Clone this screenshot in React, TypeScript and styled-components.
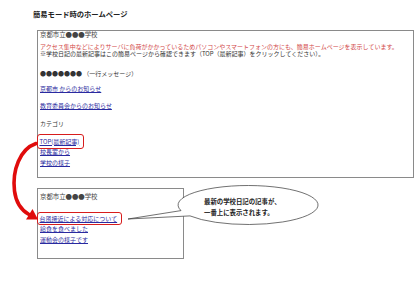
import React from 'react'
import styled, { createGlobalStyle } from 'styled-components'

const GlobalStyle = createGlobalStyle`
  html, body {
    margin: 0;
    padding: 0;
    background: #fff;
  }
  body {
    font-family: "Noto Sans CJK JP", "Noto Sans", sans-serif;
    color: #333;
  }
`

const Page = styled.div`
  position: relative;
  width: 420px;
  height: 291px;
  padding: 10px 0 0 33px;
  box-sizing: border-box;
`

const Title = styled.h1`
  margin: 0;
  font-size: 7.3px;
  line-height: 8px;
  font-weight: bold;
  color: #222;
`

const Frame = styled.div<{ w: number; h: number; top: number }>`
  box-sizing: border-box;
  width: ${({ w }) => w}px;
  height: ${({ h }) => h}px;
  margin: ${({ top }) => top}px 0 0 4px;
  padding: 0 0 0 2px;
  border: 1px solid #8a8a8a;
  font-size: 6px;
  line-height: 8px;
`

const Line = styled.div<{ gap?: number }>`
  margin-top: ${({ gap }) => gap ?? 0}px;
  white-space: nowrap;
`

const SchoolName = styled(Line)`
  font-size: 6.4px;
  color: #444;
`

const Notice = styled.div<{ gap: number }>`
  margin-top: ${({ gap }) => gap}px;
  line-height: 7px;
  white-space: nowrap;
`

const Warn = styled.div`
  color: #d24848;
`

const Links = styled.div<{ gap: number }>`
  display: flex;
  flex-direction: column;
  align-items: flex-start;
  gap: 3px;
  margin-top: ${({ gap }) => gap}px;
`

const Link = styled.a`
  color: #2a2aa0;
  text-decoration: underline;
  text-decoration-thickness: 0.5px;
  text-underline-offset: 1px;
  white-space: nowrap;
`

const Marked = styled.span<{ tall: number }>`
  display: inline-block;
  margin: ${({ tall }) => -tall}px 0 ${({ tall }) => -tall}px -3.5px;
  padding: ${({ tall }) => tall - 1.5}px 4px ${({ tall }) => tall - 1.5}px 2px;
  border: 1.5px solid #d81c1c;
  border-radius: 3px;
`

const Overlay = styled.svg`
  position: absolute;
  left: 0;
  top: 0;
  pointer-events: none;
`

const Bubble = styled.div`
  position: absolute;
  left: 204px;
  top: 196px;
  font-size: 6.4px;
  line-height: 11px;
  font-weight: bold;
  color: #222;
  white-space: nowrap;
`

export default function App() {
  return (
    <>
      <GlobalStyle />
      <Page>
        <Title>簡易モード時のホームページ</Title>
        <Frame w={377} h={148} top={12}>
          <SchoolName>京都市立●●●学校</SchoolName>
          <Notice gap={3.5}>
            <Warn>
              アクセス集中などによりサーバに負荷がかかっているためパソコンやスマートフォンの方にも、簡易ホームページを表示しています。
            </Warn>
            <div>※学校日記の最新記事はこの簡易ページから確認できます（TOP（最新記事）をクリックしてください）。</div>
          </Notice>
          <Line gap={13.5}>●●●●●●● （一行メッセージ）</Line>
          <Line gap={7}>
            <Link href="#">京都市 からのお知らせ</Link>
          </Line>
          <Line gap={9}>
            <Link href="#">教育委員会からのお知らせ</Link>
          </Line>
          <Line gap={10}>カテゴリ</Line>
          <Links gap={10}>
            <Marked tall={4}>
              <Link href="#">TOP(最新記事)</Link>
            </Marked>
            <Link href="#">校長室から</Link>
            <Link href="#">学校の様子</Link>
          </Links>
        </Frame>
        <Frame w={147} h={71} top={10}>
          <SchoolName gap={4}>京都市立●●●学校</SchoolName>
          <Links gap={14}>
            <Marked tall={3}>
              <Link href="#">台風接近による対応について</Link>
            </Marked>
            <Link href="#">給食を食べました</Link>
            <Link href="#">運動会の様子です</Link>
          </Links>
        </Frame>

        <Overlay width={420} height={291} viewBox="0 0 420 291">
          <path
            d="M36,143.5 C20,149 12,170 14.5,191 C16,203 21,210 29,214.5"
            fill="none"
            stroke="#e00c0c"
            strokeWidth={3.6}
            strokeLinecap="round"
          />
          <polygon points="38,219.5 26,219.5 32.5,209" fill="#e00c0c" />
          <path
            d="M181,210.6 L128,219 L190,215.9 A70,19.5 0 1,0 181,210.6 Z"
            fill="#fff"
            stroke="#333"
            strokeWidth={0.7}
          />
        </Overlay>
        <Bubble>
          最新の学校日記の記事が、
          <br />
          一番上に表示されます。
        </Bubble>
      </Page>
    </>
  )
}
